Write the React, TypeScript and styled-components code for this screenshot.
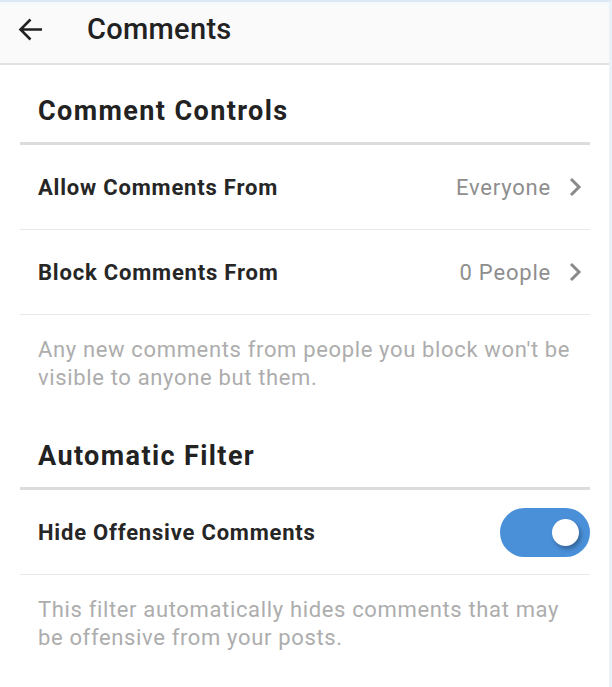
import styled, { createGlobalStyle } from "styled-components";

const GlobalStyle = createGlobalStyle`
  body {
    margin: 0;
    background: #ffffff;
    font-family: Roboto, "Noto Sans", Arial, sans-serif;
  }
`;

const Screen = styled.div`
  width: 609px;
  min-height: 685px;
  border-top: 2px solid #dce8f3;
  border-right: 3px solid #e9f1f9;
  background: #ffffff;
`;

const Header = styled.header`
  height: 63px;
  box-sizing: border-box;
  display: flex;
  align-items: center;
  background: #fafafa;
  border-top: 4px solid #f6f9fc;
  border-bottom: 2px solid #e2e2e2;
  padding: 0 0 11px 18px;
`;

const BackButton = styled.button`
  border: none;
  background: none;
  padding: 0;
  width: 25px;
  height: 25px;
  display: flex;
  color: #222;
`;

const Title = styled.h1`
  margin: 0 0 0 44px;
  font-size: 29px;
  font-weight: 500;
  letter-spacing: 0.3px;
  color: #222;
  line-height: 1;
`;

const Content = styled.main`
  padding: 0 19px 0 20px;
`;

const SectionTitle = styled.h2`
  margin: 0;
  padding: 31px 0 16px 18px;
  font-size: 27px;
  line-height: 30px;
  font-weight: 700;
  letter-spacing: 1.4px;
  color: #222;
  border-bottom: 3px solid #dcdcdc;
`;

const Row = styled.div`
  height: 84px;
  display: flex;
  align-items: center;
  justify-content: space-between;
  padding-left: 18px;
  border-bottom: 1px solid #e8e8e8;
`;

const Label = styled.span`
  font-size: 22px;
  font-weight: 700;
  letter-spacing: 0.8px;
  color: #262626;
`;

const ValueLink = styled.span`
  display: flex;
  align-items: center;
  gap: 17px;
  padding-right: 8px;
  font-size: 22px;
  letter-spacing: 0.8px;
  color: #8e8e8e;
`;

const Description = styled.p`
  margin: 0;
  padding: 21px 10px 18px 18px;
  font-size: 22px;
  line-height: 28px;
  letter-spacing: 0.65px;
  color: #adadad;
`;

const Track = styled.div<{ $on: boolean }>`
  width: 90px;
  height: 49px;
  border-radius: 25px;
  background: ${(p) => (p.$on ? "#4a90d9" : "#c8c8c8")};
  display: flex;
  align-items: center;
  justify-content: ${(p) => (p.$on ? "flex-end" : "flex-start")};
  padding: 0 11px;
  box-sizing: border-box;
`;

const Knob = styled.div`
  width: 27px;
  height: 27px;
  border-radius: 50%;
  background: #fff;
  box-shadow: 2px 3px 4px rgba(0, 0, 0, 0.3);
`;

function Chevron() {
  return (
    <svg width="14" height="20" viewBox="0 0 14 20">
      <polyline points="3,2 11,10 3,18" fill="none" stroke="#8a8a8a" strokeWidth="3" />
    </svg>
  );
}

function BackArrow() {
  return (
    <svg width="25" height="25" viewBox="0 0 25 25">
      <path d="M24 12.5H3M12.5 2.5L2.5 12.5L12.5 22.5" fill="none" stroke="currentColor" strokeWidth="2.6" />
    </svg>
  );
}

export default function App() {
  return (
    <>
      <GlobalStyle />
      <Screen>
        <Header>
          <BackButton aria-label="Back">
            <BackArrow />
          </BackButton>
          <Title>Comments</Title>
        </Header>
        <Content>
          <SectionTitle>Comment Controls</SectionTitle>
          <Row>
            <Label>Allow Comments From</Label>
            <ValueLink>
              Everyone
              <Chevron />
            </ValueLink>
          </Row>
          <Row>
            <Label>Block Comments From</Label>
            <ValueLink>
              0 People
              <Chevron />
            </ValueLink>
          </Row>
          <Description>
            Any new comments from people you block won't be visible to anyone but them.
          </Description>

          <SectionTitle>Automatic Filter</SectionTitle>
          <Row>
            <Label>Hide Offensive Comments</Label>
            <Track $on={true}>
              <Knob />
            </Track>
          </Row>
          <Description>
            This filter automatically hides comments that may be offensive from your posts.
          </Description>
        </Content>
      </Screen>
    </>
  );
}
